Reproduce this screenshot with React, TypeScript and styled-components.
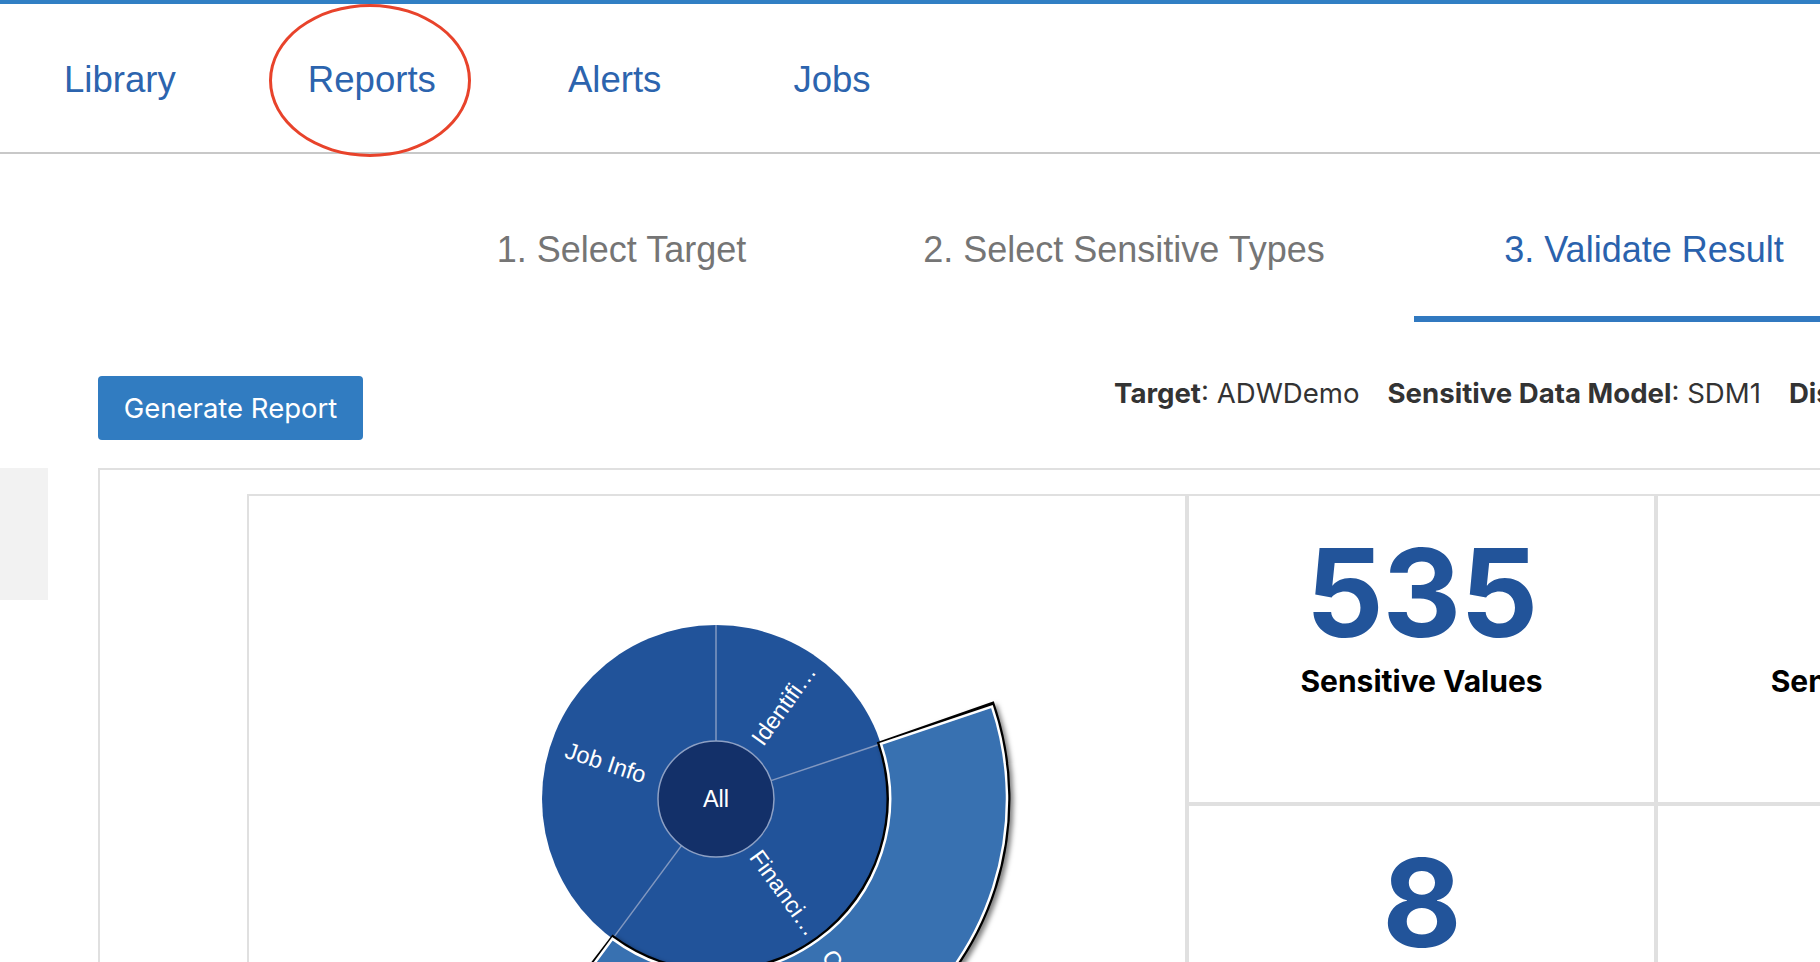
import React from 'react';
import styled, { createGlobalStyle } from 'styled-components';

const GlobalStyle = createGlobalStyle`
  html, body {
    margin: 0;
    padding: 0;
    background: #fff;
    overflow: hidden;
  }
  body {
    font-family: "Liberation Sans", Arial, sans-serif;
  }
`;

const Page = styled.div`
  width: 2300px;
  min-height: 962px;
`;

const TopStripe = styled.div`
  height: 4px;
  background: #317fc4;
`;

const NavBar = styled.nav`
  position: relative;
  display: flex;
  align-items: center;
  gap: 132px;
  height: 150px;
  padding: 5px 0 0 64px;
  box-sizing: border-box;
  border-bottom: 2px solid #c8c8c8;
`;

const NavItem = styled.a`
  font-size: 36.6px;
  line-height: 1;
  color: #2c64ae;
  text-decoration: none;
  cursor: pointer;
`;

// hand-drawn annotation circle around "Reports"
const Highlight = styled.div`
  position: absolute;
  left: 269px;
  top: 0;
  width: 202px;
  height: 153px;
  box-sizing: border-box;
  border: 3.5px solid #e8432b;
  border-radius: 50%;
  pointer-events: none;
  z-index: 2;
`;

const StepsBar = styled.div`
  display: flex;
  padding-left: 409px;
`;

const Step = styled.div<{ $active?: boolean; $width: number }>`
  width: ${({ $width }) => $width}px;
  flex-shrink: 0;
  box-sizing: border-box;
  padding: 75px 0 45px;
  text-align: center;
  font-size: 36px;
  line-height: 42px;
  white-space: nowrap;
  color: ${({ $active }) => ($active ? '#2a62ad' : '#757575')};
  border-bottom: 6px solid ${({ $active }) => ($active ? '#3179c0' : 'transparent')};
`;

const Toolbar = styled.div`
  display: flex;
  align-items: flex-start;
  margin-top: 54px;
  padding-left: 98px;
`;

const PrimaryButton = styled.button`
  width: 265px;
  height: 64px;
  flex-shrink: 0;
  border: none;
  border-radius: 4px;
  background: #317cc1;
  color: #fff;
  font-family: Inter, "Liberation Sans", sans-serif;
  font-size: 27.5px;
  cursor: pointer;
`;

const Meta = styled.div`
  display: flex;
  gap: 28px;
  margin: 1px 0 0 751px;
  font-family: Inter, "Liberation Sans", sans-serif;
  font-size: 27.6px;
  line-height: 32px;
  color: #333;
  white-space: nowrap;

  b {
    font-weight: 700;
  }
`;

const Main = styled.div`
  display: flex;
  align-items: flex-start;
  margin-top: 28px;
`;

const SideTab = styled.div`
  width: 48px;
  height: 132px;
  flex-shrink: 0;
  background: #f2f2f2;
`;

const Panel = styled.div`
  flex: 1;
  margin-left: 50px;
  padding: 24px 0 0 147px;
  border: 2px solid #e0e0e0;
  min-height: 700px;
`;

const Dashboard = styled.div`
  display: grid;
  grid-template-columns: 940px 469px 469px 469px;
  grid-template-rows: 310px 310px;
`;

const ChartCell = styled.div`
  grid-row: span 2;
  box-sizing: border-box;
  border: 2px solid #e0e0e0;
  overflow: hidden;
`;

const Card = styled.div`
  box-sizing: border-box;
  border: 2px solid #e0e0e0;
  display: flex;
  flex-direction: column;
  align-items: center;
  padding-top: 36px;
  font-family: Inter, "Liberation Sans", sans-serif;
`;

const Figure = styled.div`
  height: 122px;
  font-size: 122px;
  line-height: 122px;
  font-weight: 700;
  letter-spacing: -1px;
  color: #22549a;
`;

const Caption = styled.div`
  margin-top: 9px;
  font-size: 30px;
  line-height: 36px;
  font-weight: 700;
  color: #000;
  white-space: nowrap;
`;

const CX = 467;
const CY = 303;
const R_CORE = 58;
const R_MID = 174;
const R_OUT = 291;

const pt = (r: number, a: number) => {
  const rad = (a * Math.PI) / 180;
  return [CX + r * Math.sin(rad), CY - r * Math.cos(rad)];
};

const arcPath = (r0: number, r1: number, a0: number, a1: number) => {
  const large = a1 - a0 > 180 ? 1 : 0;
  const [x0, y0] = pt(r1, a0);
  const [x1, y1] = pt(r1, a1);
  const [x2, y2] = pt(r0, a1);
  const [x3, y3] = pt(r0, a0);
  return `M${x0} ${y0} A${r1} ${r1} 0 ${large} 1 ${x1} ${y1} L${x2} ${y2} A${r0} ${r0} 0 ${large} 0 ${x3} ${y3} Z`;
};

const labelProps = (r: number, mid: number) => {
  const [x, y] = pt(r, mid);
  const rot = mid < 180 ? mid - 90 : mid - 270;
  return { x, y, transform: `rotate(${rot} ${x} ${y})` };
};

const categories = [
  { name: 'Identifi…', from: 0, to: 71.5 },
  { name: 'Financi…', from: 71.5, to: 216.5 },
  { name: 'Job Info', from: 216.5, to: 360 },
];

const selected = { name: 'Credit…', from: 71.5, to: 216.5 };

const Sunburst: React.FC = () => {
  const mid = (selected.from + selected.to) / 2;
  return (
    <svg width="936" height="616" style={{ display: 'block' }}>
      <defs>
        <filter id="lift" x="-20%" y="-20%" width="140%" height="140%">
          <feDropShadow dx="3" dy="3" stdDeviation="2.5" floodColor="#000" floodOpacity="0.5" />
        </filter>
      </defs>
      <circle cx={CX} cy={CY} r={R_MID} fill="#21539a" />
      {categories.map((c) => {
        const [x0, y0] = pt(R_CORE, c.from);
        const [x1, y1] = pt(R_MID, c.from);
        return <line key={c.name} x1={x0} y1={y0} x2={x1} y2={y1} stroke="#8298c0" strokeWidth="1.5" />;
      })}
      <circle cx={CX} cy={CY} r={R_CORE} fill="#133069" stroke="#8da0c4" strokeWidth="1.5" />
      <g fill="#fff" fontFamily='"Liberation Sans", Arial, sans-serif' fontSize="23.5" textAnchor="middle" dominantBaseline="central">
        <text x={CX} y={CY}>All</text>
        {categories.map((c) => (
          <text key={c.name} {...labelProps(116, (c.from + c.to) / 2)}>{c.name}</text>
        ))}
      </g>
      <g filter="url(#lift)">
        <path d={arcPath(R_MID - 3.5, R_OUT + 3.5, selected.from - 0.9, selected.to + 0.9)} fill="#000" />
        <path d={arcPath(R_MID, R_OUT, selected.from, selected.to)} fill="#3871b1" stroke="#fff" strokeWidth="2.5" />
      </g>
      <text
        {...labelProps((R_MID + R_OUT) / 2, mid)}
        fill="#fff"
        fontFamily='"Liberation Sans", Arial, sans-serif'
        fontSize="23.5"
        textAnchor="middle"
        dominantBaseline="central"
      >
        {selected.name}
      </text>
    </svg>
  );
};

const stats = [
  { value: '535', label: 'Sensitive Values' },
  { value: '', label: 'Sensitive Tables' },
  { value: '', label: '' },
  { value: '8', label: 'Sensitive Types' },
  { value: '', label: '' },
  { value: '', label: '' },
];

const App: React.FC = () => {
  return (
    <Page>
      <GlobalStyle />
      <TopStripe />
      <NavBar>
        <NavItem>Library</NavItem>
        <NavItem>Reports</NavItem>
        <NavItem>Alerts</NavItem>
        <NavItem>Jobs</NavItem>
        <Highlight />
      </NavBar>
      <StepsBar>
        <Step $width={425}>1. Select Target</Step>
        <Step $width={580}>2. Select Sensitive Types</Step>
        <Step $width={460} $active>3. Validate Result</Step>
      </StepsBar>
      <Toolbar>
        <PrimaryButton>Generate Report</PrimaryButton>
        <Meta>
          <span><b>Target</b>: ADWDemo</span>
          <span><b>Sensitive Data Model</b>: SDM1</span>
          <span><b>Discovered</b>: 12/10/2019</span>
        </Meta>
      </Toolbar>
      <Main>
        <SideTab />
        <Panel>
          <Dashboard>
            <ChartCell>
              <Sunburst />
            </ChartCell>
            {stats.map((s, i) => (
              <Card key={i}>
                <Figure>{s.value}</Figure>
                <Caption>{s.label}</Caption>
              </Card>
            ))}
          </Dashboard>
        </Panel>
      </Main>
    </Page>
  );
};

export default App;
